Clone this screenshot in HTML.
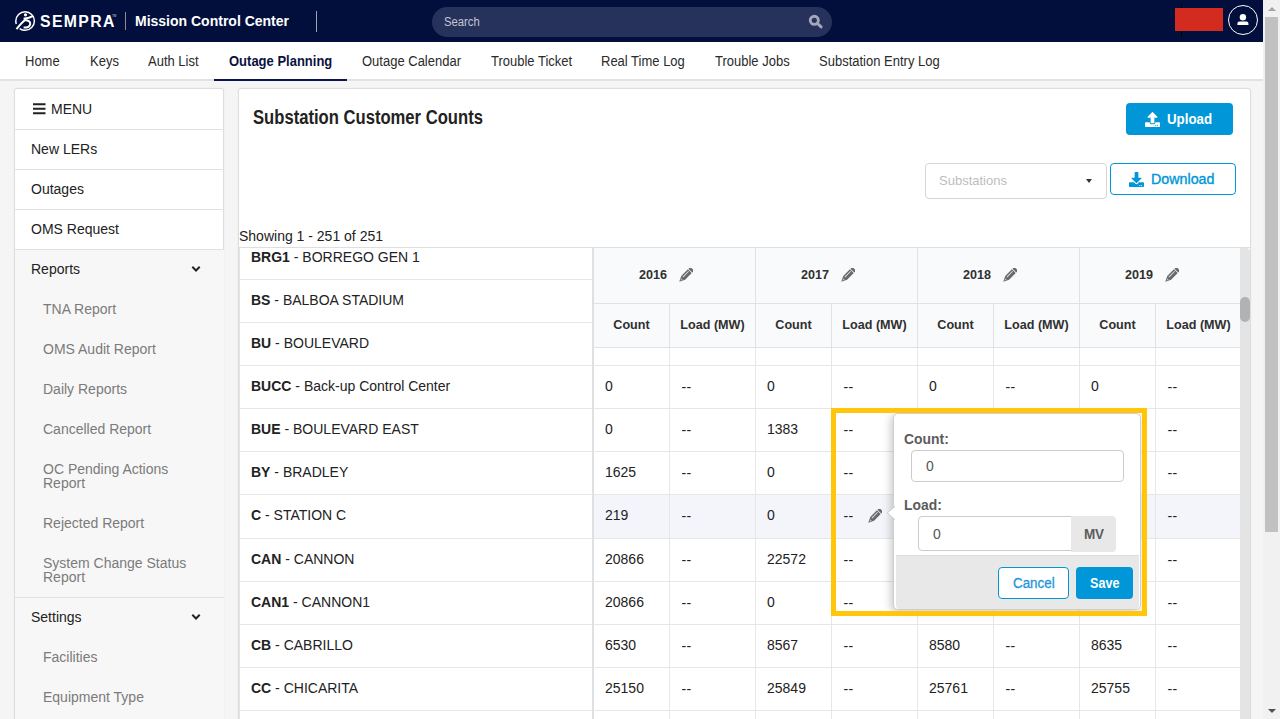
<!DOCTYPE html>
<html lang="en">
<head>
<meta charset="utf-8">
<title>Mission Control Center - Substation Customer Counts</title>
<style>
*{box-sizing:border-box;margin:0;padding:0}
html,body{width:1280px;height:719px;overflow:hidden}
body{font-family:"Liberation Sans",Arial,sans-serif;font-size:14px;color:#222;background:#f5f5f5;position:relative}
.abs{position:absolute}
/* header */
#hdr{position:absolute;left:0;top:0;width:1263px;height:42px;background:#020f3c}
#hdr .brand{position:absolute;left:40px;top:11px;font-size:15.8px;line-height:22px;color:#fff;letter-spacing:1.35px;font-weight:700}
#hdr .tm{position:absolute;left:112px;top:14px;font-size:3px;line-height:4px;color:#cfd2de}
#hdr .div1{position:absolute;left:125px;top:12px;width:1px;height:18px;background:#8f8c88}
#hdr .app{position:absolute;left:135px;top:11px;font-size:14px;line-height:20px;color:#fff;font-weight:700;white-space:nowrap}
#hdr .div2{position:absolute;left:316px;top:11px;width:1px;height:21px;background:#9da1b3}
#search{position:absolute;left:432px;top:7px;width:400px;height:30px;border-radius:15px;background:#27325c}
#search span{position:absolute;left:12px;top:8px;font-size:12px;line-height:15px;color:#c3c6d5;transform:scaleX(.94);transform-origin:0 50%}
#search svg{position:absolute;left:376px;top:7px}
#redact{position:absolute;left:1175px;top:8px;width:48px;height:23px;background:#d42b20}
#redline{position:absolute;left:1181px;top:5px;width:1.300px;height:32px;background:#000}
#user{position:absolute;left:1228px;top:5px;width:30px;height:30px;border:1.5px solid #fff;border-radius:50%}
/* page scrollbar */
#vsb{position:absolute;left:1263px;top:0;width:17px;height:719px;background:#f1f1f1}
#vsb .thumb{position:absolute;left:2px;top:17px;width:13px;height:515px;background:#c1c1c1}
#vsb .up{position:absolute;left:4.500px;top:6.500px;width:0;height:0;border-left:4px solid transparent;border-right:4px solid transparent;border-bottom:4.500px solid #a3a3a3}
#vsb .dn{position:absolute;left:4.500px;top:709px;width:0;height:0;border-left:4px solid transparent;border-right:4px solid transparent;border-top:4.500px solid #505050}
/* nav */
#nav{position:absolute;left:0;top:42px;width:1263px;height:39px;background:#fff;border-bottom:2px solid #e2e2e2}
#nav a{position:absolute;top:11px;font-size:13px;line-height:16px;color:#2a2a2a;white-space:nowrap;text-decoration:none;transform:scaleY(1.1);transform-origin:0 0}
#nav a.act{font-weight:700;color:#0b1240}
#nav .ul{position:absolute;left:214px;top:37px;width:133px;height:2px;background:#0b1550}

/* sidebar */
#side{position:absolute;left:14px;top:88px;width:210px;height:640px;box-shadow:0 0 2px rgba(0,0,0,.06);background:#fff;border:1px solid #ddd;border-radius:3px 3px 0 0}
#side .it{position:absolute;left:-1px;width:209px;border-top:1px solid #e1e1e1;font-size:14px;line-height:16px;color:#222;padding:11px 0 0 16px}
#side .grp{background:#f7f7f7}
#side .sub{position:absolute;left:-1px;width:209px;background:#f7f7f7;font-size:14px;line-height:14px;color:#7b7b7b;padding:13px 0 0 28px}
#side svg.chev{position:absolute;left:175.500px;top:15px}

/* main */
#main{position:absolute;left:238px;top:88px;width:1013px;height:640px;background:#fff;border:1px solid #ddd;border-radius:3px 3px 0 0;box-shadow:0 0 2px rgba(0,0,0,.06)}
#title{position:absolute;left:253px;top:105px;font-size:18.8px;line-height:24px;font-weight:700;color:#222;white-space:nowrap;transform:scale(.885,1.04);transform-origin:0 0}
.btn{position:absolute;border-radius:4px;font-weight:700;font-size:14px;line-height:18px;white-space:nowrap}
.btn span{transform-origin:0 50%}
#upload{left:1126px;top:103px;width:107px;height:32px;background:#0096d8;color:#fff}
#download{left:1110px;top:163px;width:126px;height:32px;background:#fff;border:1px solid #0096d8;color:#0096d8;font-weight:400}
#sel{position:absolute;left:925px;top:163px;width:182px;height:36px;border:1px solid #d6d6d6;border-radius:4px;background:#fff}
#sel span{position:absolute;left:13px;top:9px;font-size:13px;line-height:16px;color:#bdbdbd}
#sel i{position:absolute;left:159.500px;top:14.500px;width:0;height:0;border-left:3.800px solid transparent;border-right:3.800px solid transparent;border-top:4.300px solid #333}
#showing{position:absolute;left:239px;top:228px;font-size:14px;line-height:16px;color:#222;white-space:nowrap}



/* popover */
#ybox{position:absolute;left:831px;top:408px;width:316px;height:208px;border:5px solid #ffc60a}
#pop{position:absolute;left:893px;top:413px;width:248px;height:197px;background:#fff;border:1px solid #cfcfcf;border-radius:5px;box-shadow:-2px 2px 8px rgba(0,0,0,.22)}
#pop .lbl{position:absolute;font-size:13.5px;line-height:16px;font-weight:700;color:#5c5c5c;white-space:nowrap;transform:scale(1.03,1.07);transform-origin:0 0}
#pop .inp{position:absolute;background:#fff;border:1px solid #ccc;border-radius:4px}
#pop .inp span{position:absolute;left:14px;top:7px;font-size:14px;line-height:16px;color:#555}
#pop .addon{position:absolute;left:176px;top:102px;width:45px;height:36px;background:#e8e8e8;border-radius:0 4px 4px 0}
#pop .addon span{position:absolute;left:13px;top:10px;font-size:13.5px;line-height:16px;font-weight:700;color:#5c5c5c;letter-spacing:-.3px;transform:scaleY(1.06);transform-origin:0 0}
#pop .foot{position:absolute;left:1px;top:141px;width:243px;height:54px;background:#e8e8e8;border-top:1px solid #dcdcdc;border-radius:0 0 4px 4px}
#pop .b{position:absolute;top:153px;height:32px;border-radius:4px;font-size:14px;line-height:18px;white-space:nowrap}
#pop .b span{position:absolute;top:7px;display:inline-block;transform-origin:0 50%}
#arrow{position:absolute;left:886px;top:505px}








/* table */
#tbl{position:absolute;left:239px;top:247px;width:1011px;height:480px;overflow:hidden;border-top:1px solid #dedede;background:#fff}
#tbl .lrow{position:absolute;left:0;width:353px;border-bottom:1px solid #e7e7e7;background:#fff}
#tbl .lrow span{position:absolute;left:12px;font-size:14px;line-height:16px;color:#222;white-space:nowrap}
#tbl .lb{position:absolute;left:0;top:0;width:1px;height:480px;background:#e4e4e4}
#tbl .vdiv{position:absolute;left:353px;top:0;width:2px;height:480px;background:#e0e0e3}
#tbl .drow{position:absolute;left:355px;width:646px;border-bottom:1px solid #e7e7e7;background:#fff}
#tbl .drow.hl{background:#f4f5fa}
#tbl .c{position:absolute;top:0;height:100%;border-right:1px solid #e7e7e7}
#tbl .c span{position:absolute;left:11px;font-size:14px;line-height:16px;color:#222;white-space:nowrap}
#thead{position:absolute;left:355px;top:0;width:646px;height:100px;background:#f9fafb;border-bottom:1px solid #e2e2e2}
#thead .yr{position:absolute;top:0;height:56px;border-right:1px solid #e2e2e2;border-bottom:1px solid #e2e2e2}
#thead .yr span{position:absolute;top:19px;font-size:12.6px;line-height:16px;font-weight:700;color:#303030}
#thead .sh{position:absolute;top:56px;height:43px;border-right:1px solid #e2e2e2;text-align:center}
#thead .sh span{display:inline-block;margin-top:13px;font-size:12.6px;line-height:16px;font-weight:700;color:#303030;white-space:nowrap}
#isb{position:absolute;left:1000.500px;top:0;width:10px;height:480px;background:#e4e4e4;border-top-right-radius:4px}
#isb i{position:absolute;left:0;top:49px;width:10px;height:25px;border-radius:5px;background:#b2b2b2}
/* endtable */
</style>
</head>
<body>
<div id="hdr">
  <svg class="abs" style="left:13px;top:9px" width="24" height="24" viewBox="13 9 24 24"><circle cx="25.100" cy="21" r="9.300" fill="none" stroke="#fff" stroke-width="1.500" stroke-dasharray="20.300 5.700 33"/><circle cx="25.500" cy="14.800" r="1.600" fill="#fff"/><path d="M23.600 18.700C26.500 18.400 30.200 17.600 33.400 15.800" fill="none" stroke="#fff" stroke-width="2"/><path d="M26.200 19.300C22.600 21.400 19.600 25 16.500 29.200" fill="none" stroke="#fff" stroke-width="2"/><path d="M25.400 20.300c3.100 0 5.300 1.600 4.800 3.900-.5 2.300-3.400 3.500-6.600 3.400" fill="none" stroke="#fff" stroke-width="2"/></svg>
  <div class="brand">SEMPRA</div><div class="tm">TM</div>
  <div class="div1"></div>
  <div class="app">Mission Control Center</div>
  <div class="div2"></div>
  <div id="search"><span>Search</span>
    <svg width="16" height="16" viewBox="0 0 16 16"><circle cx="6.300" cy="6.300" r="4.050" fill="none" stroke="#a3a7be" stroke-width="2.900"/><path d="M9.800 9.800l3.300 3.100" stroke="#a3a7be" stroke-width="2.900" stroke-linecap="round"/></svg>
  </div>
  <div id="redline"></div>
  <div id="redact"></div>
  <div id="user"><svg class="abs" style="left:7px;top:6px" width="14" height="14" viewBox="0 0 14 14"><circle cx="6.900" cy="5.300" r="3.200" fill="#fff"/><path d="M1.400 13.100v-1.700a2 2 0 0 1 2-2h7a2 2 0 0 1 2 2v1.700z" fill="#fff"/></svg></div>
</div>
<div id="vsb"><div class="up"></div><div class="thumb"></div><div class="dn"></div></div>
<div id="nav">
  <a style="left:25px">Home</a>
  <a style="left:90px">Keys</a>
  <a style="left:148px">Auth List</a>
  <a class="act" style="left:229px">Outage Planning</a>
  <a style="left:362px">Outage Calendar</a>
  <a style="left:491px">Trouble Ticket</a>
  <a style="left:601px">Real Time Log</a>
  <a style="left:715px">Trouble Jobs</a>
  <a style="left:819px">Substation Entry Log</a>
  <div class="ul"></div>
</div>
<div id="side"><div class="abs" style="left:1px;top:1px">
  <div class="it" style="top:0;height:40px;border-top:0;padding-left:36px"><svg class="abs" style="left:18px;top:13px" width="13" height="12" viewBox="0 0 13 12"><path d="M0 1.2h12.500M0 5.700h12.500M0 10.200h12.500" stroke="#222" stroke-width="2"/></svg>MENU</div>
  <div class="it" style="top:39px;height:40px">New LERs</div>
  <div class="it" style="top:79px;height:40px">Outages</div>
  <div class="it" style="top:119px;height:41px">OMS Request</div>
  <div class="it grp" style="top:159px;height:40px">Reports<svg class="chev" width="10" height="8" viewBox="0 0 10 8"><path d="M1.300 1.800L5 5.500l3.700-3.700" fill="none" stroke="#222" stroke-width="2"/></svg></div>
  <div class="sub" style="top:199px;height:40px">TNA Report</div>
  <div class="sub" style="top:239px;height:40px">OMS Audit Report</div>
  <div class="sub" style="top:279px;height:40px">Daily Reports</div>
  <div class="sub" style="top:319px;height:40px">Cancelled Report</div>
  <div class="sub" style="top:359px;height:54px">OC Pending Actions<br>Report</div>
  <div class="sub" style="top:413px;height:40px">Rejected Report</div>
  <div class="sub" style="top:453px;height:54px">System Change Status<br>Report</div>
  <div class="it grp" style="top:507px;height:40px">Settings<svg class="chev" width="10" height="8" viewBox="0 0 10 8"><path d="M1.300 1.800L5 5.500l3.700-3.700" fill="none" stroke="#222" stroke-width="2"/></svg></div>
  <div class="sub" style="top:547px;height:40px">Facilities</div>
  <div class="sub" style="top:587px;height:50px">Equipment Type</div>
</div></div>

<div id="main"></div>
<div id="title">Substation Customer Counts</div>
<div id="upload" class="btn"><svg class="abs" style="left:18.700px;top:8.500px" width="15" height="15" viewBox="0 0 512 512"><path d="M296 384h-80c-13.300 0-24-10.700-24-24V192h-87.700c-17.800 0-26.700-21.500-14.100-34.100L242.300 5.700c7.500-7.500 19.800-7.500 27.300 0l152.200 152.200c12.600 12.600 3.700 34.100-14.100 34.100H320v168c0 13.300-10.700 24-24 24zm216-8v112c0 13.300-10.700 24-24 24H24c-13.300 0-24-10.700-24-24V376c0-13.300 10.700-24 24-24h136v8c0 30.900 25.100 56 56 56h80c30.900 0 56-25.100 56-56v-8h136c13.300 0 24 10.700 24 24zm-124 88c0-11-9-20-20-20s-20 9-20 20 9 20 20 20 20-9 20-20zm64 0c0-11-9-20-20-20s-20 9-20 20 9 20 20 20 20-9 20-20z" fill="#fff"/></svg><span class="abs" style="left:41px;top:7px;transform:scaleX(.95)">Upload</span></div>
<div id="sel"><span>Substations</span><i></i></div>
<div id="download" class="btn"><svg class="abs" style="left:18px;top:7.500px" width="15" height="15" viewBox="0 0 512 512"><path d="M216 0h80c13.300 0 24 10.700 24 24v168h87.700c17.800 0 26.700 21.500 14.100 34.100L269.700 378.300c-7.500 7.500-19.800 7.500-27.300 0L90.100 226.100c-12.600-12.600-3.700-34.100 14.100-34.100H192V24c0-13.300 10.700-24 24-24zm296 376v112c0 13.300-10.700 24-24 24H24c-13.300 0-24-10.700-24-24V376c0-13.300 10.700-24 24-24h146.700l49 49c20.100 20.100 52.500 20.100 72.600 0l49-49H488c13.300 0 24 10.700 24 24zm-124 88c0-11-9-20-20-20s-20 9-20 20 9 20 20 20 20-9 20-20zm64 0c0-11-9-20-20-20s-20 9-20 20 9 20 20 20 20-9 20-20z" fill="#0096d8"/></svg><span class="abs" style="left:40px;top:6px;-webkit-text-stroke:.35px #0096d8;transform:scaleX(1.02)">Download</span></div>
<div id="showing">Showing 1 - 251 of 251</div>
<!--TABLE--><div id="tbl">
<div class="lrow" style="top:-11px;height:43px"><span style="top:12px"><b>BRG1</b> - BORREGO GEN 1</span></div>
<div class="lrow" style="top:32px;height:43px"><span style="top:12px"><b>BS</b> - BALBOA STADIUM</span></div>
<div class="lrow" style="top:75px;height:43px"><span style="top:12px"><b>BU</b> - BOULEVARD</span></div>
<div class="lrow" style="top:118px;height:43px"><span style="top:12px"><b>BUCC</b> - Back-up Control Center</span></div>
<div class="lrow" style="top:161px;height:43px"><span style="top:12px"><b>BUE</b> - BOULEVARD EAST</span></div>
<div class="lrow" style="top:204px;height:43px"><span style="top:12px"><b>BY</b> - BRADLEY</span></div>
<div class="lrow" style="top:247px;height:44px"><span style="top:12px"><b>C</b> - STATION C</span></div>
<div class="lrow" style="top:291px;height:43px"><span style="top:12px"><b>CAN</b> - CANNON</span></div>
<div class="lrow" style="top:334px;height:43px"><span style="top:12px"><b>CAN1</b> - CANNON1</span></div>
<div class="lrow" style="top:377px;height:43px"><span style="top:12px"><b>CB</b> - CABRILLO</span></div>
<div class="lrow" style="top:420px;height:43px"><span style="top:12px"><b>CC</b> - CHICARITA</span></div>
<div class="lrow" style="top:463px;height:50px"><span style="top:12px"><b>CCS</b> - CARLSBAD</span></div>
<div class="vdiv"></div><div class="lb"></div>
<div class="drow" style="top:118px;height:43px">
<div class="c" style="left:0px;width:76px"><span style="top:12px">0</span></div>
<div class="c" style="left:76px;width:86px"><span style="top:13px;left:11.500px;letter-spacing:.4px">--</span></div>
<div class="c" style="left:162px;width:76px"><span style="top:12px">0</span></div>
<div class="c" style="left:238px;width:86px"><span style="top:13px;left:11.500px;letter-spacing:.4px">--</span></div>
<div class="c" style="left:324px;width:76px"><span style="top:12px">0</span></div>
<div class="c" style="left:400px;width:86px"><span style="top:13px;left:11.500px;letter-spacing:.4px">--</span></div>
<div class="c" style="left:486px;width:76px"><span style="top:12px">0</span></div>
<div class="c" style="left:562px;width:86px"><span style="top:13px;left:11.500px;letter-spacing:.4px">--</span></div>
</div>
<div class="drow" style="top:161px;height:43px">
<div class="c" style="left:0px;width:76px"><span style="top:12px">0</span></div>
<div class="c" style="left:76px;width:86px"><span style="top:13px;left:11.500px;letter-spacing:.4px">--</span></div>
<div class="c" style="left:162px;width:76px"><span style="top:12px">1383</span></div>
<div class="c" style="left:238px;width:86px"><span style="top:13px;left:11.500px;letter-spacing:.4px">--</span></div>
<div class="c" style="left:324px;width:76px"><span style="top:12px">1390</span></div>
<div class="c" style="left:400px;width:86px"><span style="top:13px;left:11.500px;letter-spacing:.4px">--</span></div>
<div class="c" style="left:486px;width:76px"><span style="top:12px">1402</span></div>
<div class="c" style="left:562px;width:86px"><span style="top:13px;left:11.500px;letter-spacing:.4px">--</span></div>
</div>
<div class="drow" style="top:204px;height:43px">
<div class="c" style="left:0px;width:76px"><span style="top:12px">1625</span></div>
<div class="c" style="left:76px;width:86px"><span style="top:13px;left:11.500px;letter-spacing:.4px">--</span></div>
<div class="c" style="left:162px;width:76px"><span style="top:12px">0</span></div>
<div class="c" style="left:238px;width:86px"><span style="top:13px;left:11.500px;letter-spacing:.4px">--</span></div>
<div class="c" style="left:324px;width:76px"><span style="top:12px">0</span></div>
<div class="c" style="left:400px;width:86px"><span style="top:13px;left:11.500px;letter-spacing:.4px">--</span></div>
<div class="c" style="left:486px;width:76px"><span style="top:12px">0</span></div>
<div class="c" style="left:562px;width:86px"><span style="top:13px;left:11.500px;letter-spacing:.4px">--</span></div>
</div>
<div class="drow hl" style="top:247px;height:44px">
<div class="c" style="left:0px;width:76px"><span style="top:12px">219</span></div>
<div class="c" style="left:76px;width:86px"><span style="top:13px;left:11.500px;letter-spacing:.4px">--</span></div>
<div class="c" style="left:162px;width:76px"><span style="top:12px">0</span></div>
<div class="c" style="left:238px;width:86px"><span style="top:13px;left:11.500px;letter-spacing:.4px">--</span></div>
<div class="c" style="left:324px;width:76px"><span style="top:12px">0</span></div>
<div class="c" style="left:400px;width:86px"><span style="top:13px;left:11.500px;letter-spacing:.4px">--</span></div>
<div class="c" style="left:486px;width:76px"><span style="top:12px">0</span></div>
<div class="c" style="left:562px;width:86px"><span style="top:13px;left:11.500px;letter-spacing:.4px">--</span></div>
<svg class="abs" style="left:272.5px;top:13.5px" width="15" height="15" viewBox="0 0 15 15"><g transform="rotate(45 7.500 7.500)" fill="#696969"><path d="M4.800 -.900a1.100 1.100 0 0 1 1.100 -1.100h3.200a1.100 1.100 0 0 1 1.100 1.100v1.500H4.800z"/><path d="M4.800 1.400h5.400v9.400L7.500 16.300 4.800 10.800z"/><path d="M6.200 2.300h1v8.200h-1z" fill="#fff" opacity=".8"/><path d="M6.500 12.400h2L7.500 14.600z" fill="#fff" opacity=".6"/></g></svg>
</div>
<div class="drow" style="top:291px;height:43px">
<div class="c" style="left:0px;width:76px"><span style="top:12px">20866</span></div>
<div class="c" style="left:76px;width:86px"><span style="top:13px;left:11.500px;letter-spacing:.4px">--</span></div>
<div class="c" style="left:162px;width:76px"><span style="top:12px">22572</span></div>
<div class="c" style="left:238px;width:86px"><span style="top:13px;left:11.500px;letter-spacing:.4px">--</span></div>
<div class="c" style="left:324px;width:76px"><span style="top:12px">22610</span></div>
<div class="c" style="left:400px;width:86px"><span style="top:13px;left:11.500px;letter-spacing:.4px">--</span></div>
<div class="c" style="left:486px;width:76px"><span style="top:12px">22655</span></div>
<div class="c" style="left:562px;width:86px"><span style="top:13px;left:11.500px;letter-spacing:.4px">--</span></div>
</div>
<div class="drow" style="top:334px;height:43px">
<div class="c" style="left:0px;width:76px"><span style="top:12px">20866</span></div>
<div class="c" style="left:76px;width:86px"><span style="top:13px;left:11.500px;letter-spacing:.4px">--</span></div>
<div class="c" style="left:162px;width:76px"><span style="top:12px">0</span></div>
<div class="c" style="left:238px;width:86px"><span style="top:13px;left:11.500px;letter-spacing:.4px">--</span></div>
<div class="c" style="left:324px;width:76px"><span style="top:12px">0</span></div>
<div class="c" style="left:400px;width:86px"><span style="top:13px;left:11.500px;letter-spacing:.4px">--</span></div>
<div class="c" style="left:486px;width:76px"><span style="top:12px">0</span></div>
<div class="c" style="left:562px;width:86px"><span style="top:13px;left:11.500px;letter-spacing:.4px">--</span></div>
</div>
<div class="drow" style="top:377px;height:43px">
<div class="c" style="left:0px;width:76px"><span style="top:12px">6530</span></div>
<div class="c" style="left:76px;width:86px"><span style="top:13px;left:11.500px;letter-spacing:.4px">--</span></div>
<div class="c" style="left:162px;width:76px"><span style="top:12px">8567</span></div>
<div class="c" style="left:238px;width:86px"><span style="top:13px;left:11.500px;letter-spacing:.4px">--</span></div>
<div class="c" style="left:324px;width:76px"><span style="top:12px">8580</span></div>
<div class="c" style="left:400px;width:86px"><span style="top:13px;left:11.500px;letter-spacing:.4px">--</span></div>
<div class="c" style="left:486px;width:76px"><span style="top:12px">8635</span></div>
<div class="c" style="left:562px;width:86px"><span style="top:13px;left:11.500px;letter-spacing:.4px">--</span></div>
</div>
<div class="drow" style="top:420px;height:43px">
<div class="c" style="left:0px;width:76px"><span style="top:12px">25150</span></div>
<div class="c" style="left:76px;width:86px"><span style="top:13px;left:11.500px;letter-spacing:.4px">--</span></div>
<div class="c" style="left:162px;width:76px"><span style="top:12px">25849</span></div>
<div class="c" style="left:238px;width:86px"><span style="top:13px;left:11.500px;letter-spacing:.4px">--</span></div>
<div class="c" style="left:324px;width:76px"><span style="top:12px">25761</span></div>
<div class="c" style="left:400px;width:86px"><span style="top:13px;left:11.500px;letter-spacing:.4px">--</span></div>
<div class="c" style="left:486px;width:76px"><span style="top:12px">25755</span></div>
<div class="c" style="left:562px;width:86px"><span style="top:13px;left:11.500px;letter-spacing:.4px">--</span></div>
</div>
<div class="drow" style="top:463px;height:50px">
<div class="c" style="left:0px;width:76px"><span style="top:12px"></span></div>
<div class="c" style="left:76px;width:86px"><span style="top:12px"></span></div>
<div class="c" style="left:162px;width:76px"><span style="top:12px"></span></div>
<div class="c" style="left:238px;width:86px"><span style="top:12px"></span></div>
<div class="c" style="left:324px;width:76px"><span style="top:12px"></span></div>
<div class="c" style="left:400px;width:86px"><span style="top:12px"></span></div>
<div class="c" style="left:486px;width:76px"><span style="top:12px"></span></div>
<div class="c" style="left:562px;width:86px"><span style="top:12px"></span></div>
</div>
<div class="drow" style="top:100px;height:18px"><div class="c" style="left:0px;width:76px"></div><div class="c" style="left:76px;width:86px"></div><div class="c" style="left:162px;width:76px"></div><div class="c" style="left:238px;width:86px"></div><div class="c" style="left:324px;width:76px"></div><div class="c" style="left:400px;width:86px"></div><div class="c" style="left:486px;width:76px"></div><div class="c" style="left:562px;width:86px"></div></div>
<div id="thead">
<div class="yr" style="left:0px;width:162px"><span style="left:45px">2016</span><svg class="abs" style="left:84px;top:19.5px" width="15" height="15" viewBox="0 0 15 15"><g transform="rotate(45 7.500 7.500)" fill="#696969"><path d="M4.800 -.900a1.100 1.100 0 0 1 1.100 -1.100h3.200a1.100 1.100 0 0 1 1.100 1.100v1.500H4.800z"/><path d="M4.800 1.400h5.400v9.400L7.500 16.300 4.800 10.800z"/><path d="M6.200 2.300h1v8.200h-1z" fill="#fff" opacity=".8"/><path d="M6.500 12.400h2L7.500 14.600z" fill="#fff" opacity=".6"/></g></svg></div>
<div class="sh" style="left:0px;width:76px"><span>Count</span></div>
<div class="sh" style="left:76px;width:86px"><span>Load (MW)</span></div>
<div class="yr" style="left:162px;width:162px"><span style="left:45px">2017</span><svg class="abs" style="left:84px;top:19.5px" width="15" height="15" viewBox="0 0 15 15"><g transform="rotate(45 7.500 7.500)" fill="#696969"><path d="M4.800 -.900a1.100 1.100 0 0 1 1.100 -1.100h3.200a1.100 1.100 0 0 1 1.100 1.100v1.500H4.800z"/><path d="M4.800 1.400h5.400v9.400L7.500 16.300 4.800 10.800z"/><path d="M6.200 2.300h1v8.200h-1z" fill="#fff" opacity=".8"/><path d="M6.500 12.400h2L7.500 14.600z" fill="#fff" opacity=".6"/></g></svg></div>
<div class="sh" style="left:162px;width:76px"><span>Count</span></div>
<div class="sh" style="left:238px;width:86px"><span>Load (MW)</span></div>
<div class="yr" style="left:324px;width:162px"><span style="left:45px">2018</span><svg class="abs" style="left:84px;top:19.5px" width="15" height="15" viewBox="0 0 15 15"><g transform="rotate(45 7.500 7.500)" fill="#696969"><path d="M4.800 -.900a1.100 1.100 0 0 1 1.100 -1.100h3.200a1.100 1.100 0 0 1 1.100 1.100v1.500H4.800z"/><path d="M4.800 1.400h5.400v9.400L7.500 16.300 4.800 10.800z"/><path d="M6.200 2.300h1v8.200h-1z" fill="#fff" opacity=".8"/><path d="M6.500 12.400h2L7.500 14.600z" fill="#fff" opacity=".6"/></g></svg></div>
<div class="sh" style="left:324px;width:76px"><span>Count</span></div>
<div class="sh" style="left:400px;width:86px"><span>Load (MW)</span></div>
<div class="yr" style="left:486px;width:162px"><span style="left:45px">2019</span><svg class="abs" style="left:84px;top:19.5px" width="15" height="15" viewBox="0 0 15 15"><g transform="rotate(45 7.500 7.500)" fill="#696969"><path d="M4.800 -.900a1.100 1.100 0 0 1 1.100 -1.100h3.200a1.100 1.100 0 0 1 1.100 1.100v1.500H4.800z"/><path d="M4.800 1.400h5.400v9.400L7.500 16.300 4.800 10.800z"/><path d="M6.200 2.300h1v8.200h-1z" fill="#fff" opacity=".8"/><path d="M6.500 12.400h2L7.500 14.600z" fill="#fff" opacity=".6"/></g></svg></div>
<div class="sh" style="left:486px;width:76px"><span>Count</span></div>
<div class="sh" style="left:562px;width:86px"><span>Load (MW)</span></div>
</div>
<div id="isb"><i></i></div>
</div><!--ENDTABLE-->
<div id="pop"><div class="abs" style="left:1px;top:0">
  <div class="lbl" style="left:9px;top:17px">Count:</div>
  <div class="inp" style="left:16px;top:36px;width:213px;height:32px"><span>0</span></div>
  <div class="lbl" style="left:9px;top:83px">Load:</div>
  <div class="inp" style="left:23px;top:102px;width:154px;height:35px;border-radius:4px 0 0 4px"><span style="top:9px">0</span></div>
  <div class="addon"><span>MV</span></div>
  <div class="foot"></div>
  <div class="b" style="left:103px;width:71px;background:#fff;border:1px solid #0096d8;color:#1f96d8"><span style="left:14px;top:6px;transform:scaleX(.955);-webkit-text-stroke:.3px #1f96d8">Cancel</span></div>
  <div class="b" style="left:181px;width:57px;background:#0096d8;color:#fff;font-weight:700"><span style="left:14px;transform:scaleX(.9)">Save</span></div>
</div></div>
<svg id="arrow" width="9" height="16" viewBox="0 0 9 16"><path d="M9 1.300L1.200 8l7.800 6.700" fill="#fff" stroke="#c8c8c8" stroke-width="1"/></svg>
<div id="ybox"></div>


</body>
</html>
